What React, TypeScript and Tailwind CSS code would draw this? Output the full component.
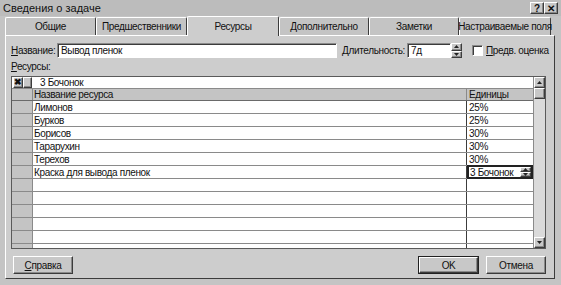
import React from "react";

const rows: [string, string][] = [
  ["Лимонов", "25%"],
  ["Бурков", "25%"],
  ["Борисов", "30%"],
  ["Тарарухин", "30%"],
  ["Терехов", "30%"],
  ["Краска для вывода пленок", "3 Бочонок"],
  ["", ""],
  ["", ""],
  ["", ""],
  ["", ""],
  ["", ""],
  ["", ""],
];

const raised =
  "border border-t-white border-l-white border-r-[#3c3c3c] border-b-[#3c3c3c] shadow-[inset_-1px_-1px_0_#8a8a8a]";
const sunken =
  "border border-t-[#8a8a8a] border-l-[#8a8a8a] border-r-white border-b-white shadow-[inset_1px_1px_0_#3c3c3c] bg-white";

function Tab({ label, w, active }: { label: string; w: string; active?: boolean }) {
  return (
    <div
      className={`${w} shrink-0 flex items-center justify-center border-t border-l border-r border-t-white border-l-white border-r-[#3c3c3c] rounded-t-[2px] ${
        active ? "h-[20px] bg-[#cdcdcd] -mb-px z-10" : "h-[18px] bg-[#c4c4c4]"
      }`}
    >
      {label}
    </div>
  );
}

function Spinner({ h }: { h: string }) {
  return (
    <div className={`w-[11px] shrink-0 ${h} flex flex-col bg-[#c8c8c8]`}>
      <div className={`flex-1 flex items-center justify-center ${raised}`}>
        <svg width="5" height="3" viewBox="0 0 5 3">
          <path d="M2.5 0 L5 3 L0 3 Z" fill="#222" />
        </svg>
      </div>
      <div className={`flex-1 flex items-center justify-center ${raised}`}>
        <svg width="5" height="3" viewBox="0 0 5 3">
          <path d="M0 0 L5 0 L2.5 3 Z" fill="#222" />
        </svg>
      </div>
    </div>
  );
}

export default function App() {
  return (
    <div
      className="w-[561px] h-[285px] bg-[#c4c4c4] overflow-hidden text-[10px] tracking-[-0.35px] text-[#111] whitespace-nowrap flex flex-col"
      style={{ fontFamily: '"Liberation Sans", Arial, sans-serif' }}
    >
      {/* title bar */}
      <div className="h-[16px] flex items-center justify-between pl-[3px] pr-[3px] bg-[#bcbcbc]">
        <span className="text-[11px] tracking-normal">Сведения о задаче</span>
        <div className="flex">
          <div className={`w-[14px] h-[12px] flex items-center justify-center font-bold text-[10px] bg-[#c8c8c8] ${raised}`}>?</div>
          <div className={`w-[14px] h-[12px] flex items-center justify-center font-bold text-[10px] bg-[#c8c8c8] ${raised}`}>✕</div>
        </div>
      </div>

      {/* tabs */}
      <div className="h-[19px] flex items-end pl-[5px]">
        <Tab label="Общие" w="w-[91px]" />
        <Tab label="Предшественники" w="w-[91px]" />
        <Tab label="Ресурсы" w="w-[92px]" active />
        <Tab label="Дополнительно" w="w-[90px]" />
        <Tab label="Заметки" w="w-[90px]" />
        <Tab label="Настраиваемые поля" w="w-[92px]" />
      </div>

      {/* panel */}
      <div className="ml-[5px] w-[550px] h-[244px] bg-[#cdcdcd] border border-t-white border-l-white border-r-[#3c3c3c] border-b-[#3c3c3c] px-[5px] pt-[7px] flex flex-col">
        <div className="flex items-center h-[15px]">
          <span className="w-[46px] shrink-0">
            <u>Н</u>азвание:
          </span>
          <div className={`w-[280px] shrink-0 h-[15px] flex items-center pl-[3px] ${sunken}`}>Вывод пленок</div>
          <span className="ml-[5px] w-[65px] shrink-0">
            <u>Д</u>лительность:
          </span>
          <div className={`w-[44px] shrink-0 h-[15px] flex items-center pl-[3px] ${sunken}`}>7д</div>
          <Spinner h="h-[15px]" />
          <div className={`ml-[10px] w-[11px] h-[11px] shrink-0 ${sunken}`} />
          <span className="ml-[3px]">
            <u>П</u>редв. оценка
          </span>
        </div>

        <div className="mt-[3px] h-[11px] leading-[11px]">
          <u>Р</u>есурсы:
        </div>

        {/* grid */}
        <div className="mt-[4px] w-[535px] h-[173px] border border-[#5a5a5a] bg-white flex overflow-hidden">
          <div className="flex-1 flex flex-col">
            <div className="h-[12px] shrink-0 flex border-b border-[#8a8a8a]">
              <div className={`w-[10px] ml-[1px] flex items-center justify-center bg-[#c8c8c8] text-[9px] font-bold ${raised}`}>✖</div>
              <div className={`w-[9px] bg-[#c8c8c8] ${raised}`} />
              <div className="flex-1 pl-[8px] flex items-center">3 Бочонок</div>
            </div>
            <div className="h-[12px] shrink-0 flex border-b border-[#6a6a6a] bg-[#c4c4c4]">
              <div className="w-[21px] border-r border-[#8a8a8a]" />
              <div className="flex-1 pl-[1px] flex items-center border-r border-[#8a8a8a]">Название ресурса</div>
              <div className="w-[66px] pl-[2px] flex items-center">Единицы</div>
            </div>
            {rows.map(([name, unit], i) => (
              <div key={i} className="h-[13px] shrink-0 flex border-b border-[#8a8a8a]">
                <div className="w-[21px] bg-[#c4c4c4] border-r border-[#8a8a8a]" />
                <div className="flex-1 pl-[1px] flex items-center border-r border-[#3c3c3c]">{name}</div>
                {i === 5 ? (
                  <div className="w-[66px] flex border-2 border-[#222] -my-px">
                    <div className="flex-1 flex items-center pl-[1px]">{unit}</div>
                    <Spinner h="h-full" />
                  </div>
                ) : (
                  <div className="w-[66px] pl-[2px] flex items-center">{unit}</div>
                )}
              </div>
            ))}
          </div>
          <div className="w-[12px] bg-[#dadada] flex flex-col justify-between border-l border-[#8a8a8a]">
            <div className="flex flex-col">
              <div className={`h-[11px] flex items-center justify-center bg-[#c8c8c8] ${raised}`}>
                <svg width="5" height="3" viewBox="0 0 5 3">
                  <path d="M2.5 0 L5 3 L0 3 Z" fill="#222" />
                </svg>
              </div>
              <div className={`h-[11px] bg-[#c8c8c8] ${raised}`} />
            </div>
            <div className={`h-[11px] flex items-center justify-center bg-[#c8c8c8] ${raised}`}>
              <svg width="5" height="3" viewBox="0 0 5 3">
                <path d="M0 0 L5 0 L2.5 3 Z" fill="#222" />
              </svg>
            </div>
          </div>
        </div>

        {/* buttons */}
        <div className="mt-[7px] flex items-center">
          <div className={`ml-[2px] w-[60px] h-[18px] flex items-center justify-center bg-[#c8c8c8] ${raised}`}>
            <span>
              <u>С</u>правка
            </span>
          </div>
          <div className="ml-auto border border-[#222]">
            <div className={`w-[59px] h-[16px] flex items-center justify-center bg-[#c8c8c8] ${raised}`}>OK</div>
          </div>
          <div className={`ml-[7px] mr-[3px] w-[60px] h-[18px] flex items-center justify-center bg-[#c8c8c8] ${raised}`}>
            Отмена
          </div>
        </div>
      </div>
    </div>
  );
}
